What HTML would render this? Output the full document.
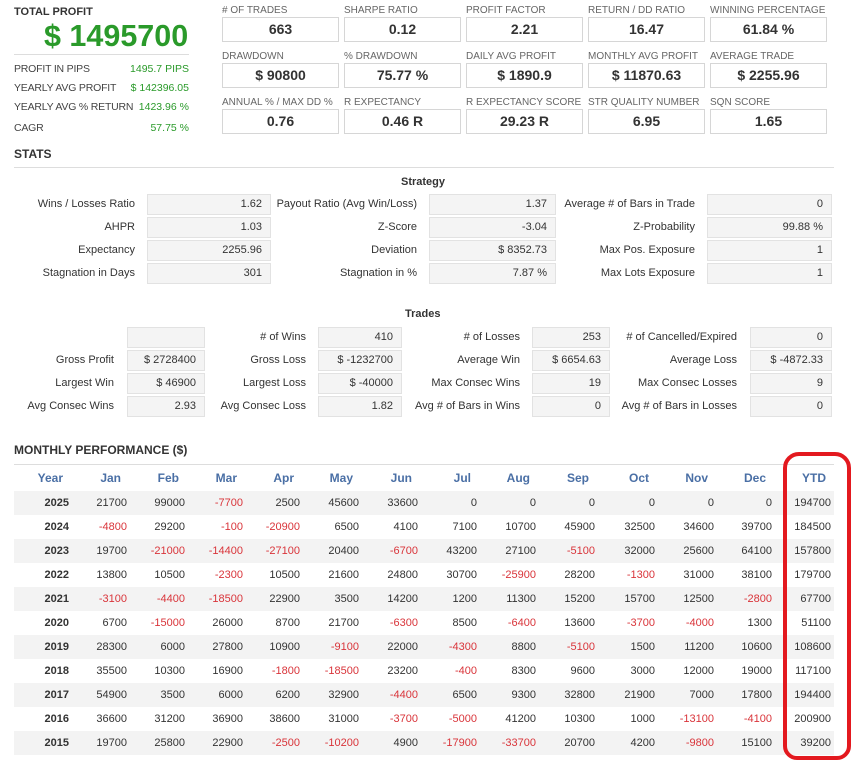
<!DOCTYPE html>
<html><head><meta charset="utf-8"><style>
*{margin:0;padding:0;box-sizing:border-box}
body{width:860px;height:771px;background:#fff;font-family:"Liberation Sans",Arial,sans-serif;color:#333;position:relative;overflow:hidden}
.a{position:absolute;white-space:nowrap}
.lbl{font-size:10px;color:#666}
.box{position:absolute;width:117px;height:25px;border:1px solid #d6d6d6;font-weight:bold;font-size:14px;text-align:center;line-height:23px;color:#333}
.lr{font-size:10.5px;color:#444;letter-spacing:-0.2px}
.g{color:#2a9a2a;font-size:10.5px}
.sl{position:absolute;font-size:11px;color:#333;text-align:right;line-height:21px}
.sb{position:absolute;height:21px;background:#f4f4f4;border:1px solid #e2e2e2;font-size:11px;text-align:right;padding-right:8px;line-height:19px;color:#333}
table{position:absolute;left:14px;top:464px;border-collapse:collapse;font-size:11px}
td,th{height:24px;text-align:right;padding-right:6px}
th{color:#4a6fa5;font-size:12px;height:27px;padding-right:12px}
tr.s td{background:#f3f3f3}
td.y{font-weight:bold}
.n{color:#d9343a}
</style></head><body>
<div class="a" style="left:14px;top:6px;font-size:11px;font-weight:bold;color:#333">TOTAL PROFIT</div>
<div class="a" style="left:44px;top:19px;font-size:30.5px;font-weight:bold;color:#2a9a2a">$ 1495700</div>
<div class="a" style="left:14px;top:54px;width:175px;border-top:1px solid #ddd"></div>
<div class="a lr" style="left:14px;top:63px">PROFIT IN PIPS</div><div class="a g" style="right:671px;top:63px">1495.7 PIPS</div>
<div class="a lr" style="left:14px;top:82px">YEARLY AVG PROFIT</div><div class="a g" style="right:671px;top:82px">$ 142396.05</div>
<div class="a lr" style="left:14px;top:101px">YEARLY AVG % RETURN</div><div class="a g" style="right:671px;top:101px">1423.96 %</div>
<div class="a lr" style="left:14px;top:122px">CAGR</div><div class="a g" style="right:671px;top:122px">57.75 %</div>

<div class="a lbl" style="left:222px;top:5px"># OF TRADES</div><div class="box" style="left:222px;top:17px">663</div>
<div class="a lbl" style="left:344px;top:5px">SHARPE RATIO</div><div class="box" style="left:344px;top:17px">0.12</div>
<div class="a lbl" style="left:466px;top:5px">PROFIT FACTOR</div><div class="box" style="left:466px;top:17px">2.21</div>
<div class="a lbl" style="left:588px;top:5px">RETURN / DD RATIO</div><div class="box" style="left:588px;top:17px">16.47</div>
<div class="a lbl" style="left:710px;top:5px">WINNING PERCENTAGE</div><div class="box" style="left:710px;top:17px">61.84 %</div>
<div class="a lbl" style="left:222px;top:51px">DRAWDOWN</div><div class="box" style="left:222px;top:63px">$ 90800</div>
<div class="a lbl" style="left:344px;top:51px">% DRAWDOWN</div><div class="box" style="left:344px;top:63px">75.77 %</div>
<div class="a lbl" style="left:466px;top:51px">DAILY AVG PROFIT</div><div class="box" style="left:466px;top:63px">$ 1890.9</div>
<div class="a lbl" style="left:588px;top:51px">MONTHLY AVG PROFIT</div><div class="box" style="left:588px;top:63px">$ 11870.63</div>
<div class="a lbl" style="left:710px;top:51px">AVERAGE TRADE</div><div class="box" style="left:710px;top:63px">$ 2255.96</div>
<div class="a lbl" style="left:222px;top:97px">ANNUAL % / MAX DD %</div><div class="box" style="left:222px;top:109px">0.76</div>
<div class="a lbl" style="left:344px;top:97px">R EXPECTANCY</div><div class="box" style="left:344px;top:109px">0.46 R</div>
<div class="a lbl" style="left:466px;top:97px">R EXPECTANCY SCORE</div><div class="box" style="left:466px;top:109px">29.23 R</div>
<div class="a lbl" style="left:588px;top:97px">STR QUALITY NUMBER</div><div class="box" style="left:588px;top:109px">6.95</div>
<div class="a lbl" style="left:710px;top:97px">SQN SCORE</div><div class="box" style="left:710px;top:109px">1.65</div>

<div class="a" style="left:14px;top:147px;font-size:12px;font-weight:bold">STATS</div>
<div class="a" style="left:14px;top:167px;width:820px;border-top:1px solid #ddd"></div>
<div class="a" style="left:401px;top:176px;font-size:11px;font-weight:bold">Strategy</div>

<div class="sl" style="right:725px;top:194px">Wins / Losses Ratio</div><div class="sb" style="left:147px;top:194px;width:124px">1.62</div>
<div class="sl" style="right:443px;top:194px">Payout Ratio (Avg Win/Loss)</div><div class="sb" style="left:429px;top:194px;width:127px">1.37</div>
<div class="sl" style="right:165px;top:194px">Average # of Bars in Trade</div><div class="sb" style="left:707px;top:194px;width:125px">0</div>
<div class="sl" style="right:725px;top:217px">AHPR</div><div class="sb" style="left:147px;top:217px;width:124px">1.03</div>
<div class="sl" style="right:443px;top:217px">Z-Score</div><div class="sb" style="left:429px;top:217px;width:127px">-3.04</div>
<div class="sl" style="right:165px;top:217px">Z-Probability</div><div class="sb" style="left:707px;top:217px;width:125px">99.88 %</div>
<div class="sl" style="right:725px;top:240px">Expectancy</div><div class="sb" style="left:147px;top:240px;width:124px">2255.96</div>
<div class="sl" style="right:443px;top:240px">Deviation</div><div class="sb" style="left:429px;top:240px;width:127px">$ 8352.73</div>
<div class="sl" style="right:165px;top:240px">Max Pos. Exposure</div><div class="sb" style="left:707px;top:240px;width:125px">1</div>
<div class="sl" style="right:725px;top:263px">Stagnation in Days</div><div class="sb" style="left:147px;top:263px;width:124px">301</div>
<div class="sl" style="right:443px;top:263px">Stagnation in %</div><div class="sb" style="left:429px;top:263px;width:127px">7.87 %</div>
<div class="sl" style="right:165px;top:263px">Max Lots Exposure</div><div class="sb" style="left:707px;top:263px;width:125px">1</div>

<div class="a" style="left:405px;top:308px;font-size:11px;font-weight:bold">Trades</div>
<div class="sb" style="left:127px;top:327px;width:78px"></div>
<div class="sl" style="right:554px;top:327px"># of Wins</div><div class="sb" style="left:318px;top:327px;width:84px">410</div>
<div class="sl" style="right:340px;top:327px"># of Losses</div><div class="sb" style="left:532px;top:327px;width:78px">253</div>
<div class="sl" style="right:123px;top:327px"># of Cancelled/Expired</div><div class="sb" style="left:750px;top:327px;width:82px">0</div>
<div class="sl" style="right:746px;top:350px">Gross Profit</div><div class="sb" style="left:127px;top:350px;width:78px">$ 2728400</div>
<div class="sl" style="right:554px;top:350px">Gross Loss</div><div class="sb" style="left:318px;top:350px;width:84px">$ -1232700</div>
<div class="sl" style="right:340px;top:350px">Average Win</div><div class="sb" style="left:532px;top:350px;width:78px">$ 6654.63</div>
<div class="sl" style="right:123px;top:350px">Average Loss</div><div class="sb" style="left:750px;top:350px;width:82px">$ -4872.33</div>
<div class="sl" style="right:746px;top:373px">Largest Win</div><div class="sb" style="left:127px;top:373px;width:78px">$ 46900</div>
<div class="sl" style="right:554px;top:373px">Largest Loss</div><div class="sb" style="left:318px;top:373px;width:84px">$ -40000</div>
<div class="sl" style="right:340px;top:373px">Max Consec Wins</div><div class="sb" style="left:532px;top:373px;width:78px">19</div>
<div class="sl" style="right:123px;top:373px">Max Consec Losses</div><div class="sb" style="left:750px;top:373px;width:82px">9</div>
<div class="sl" style="right:746px;top:396px">Avg Consec Wins</div><div class="sb" style="left:127px;top:396px;width:78px">2.93</div>
<div class="sl" style="right:554px;top:396px">Avg Consec Loss</div><div class="sb" style="left:318px;top:396px;width:84px">1.82</div>
<div class="sl" style="right:340px;top:396px">Avg # of Bars in Wins</div><div class="sb" style="left:532px;top:396px;width:78px">0</div>
<div class="sl" style="right:123px;top:396px">Avg # of Bars in Losses</div><div class="sb" style="left:750px;top:396px;width:82px">0</div>

<div class="a" style="left:14px;top:443px;font-size:12px;font-weight:bold">MONTHLY PERFORMANCE ($)</div>
<div class="a" style="left:14px;top:464px;width:820px;border-top:1px solid #ddd"></div>
<table>
<colgroup><col style="width:61px"><col style="width:58px"><col style="width:58px"><col style="width:58px"><col style="width:57px"><col style="width:59px"><col style="width:59px"><col style="width:59px"><col style="width:59px"><col style="width:59px"><col style="width:60px"><col style="width:59px"><col style="width:58px"><col style="width:56px"></colgroup>
<tr><th>Year</th><th>Jan</th><th>Feb</th><th>Mar</th><th>Apr</th><th>May</th><th>Jun</th><th>Jul</th><th>Aug</th><th>Sep</th><th>Oct</th><th>Nov</th><th>Dec</th><th style="padding-right:8px">YTD</th></tr>
<tr class="s"><td class="y">2025</td><td>21700</td><td>99000</td><td class="n">-7700</td><td>2500</td><td>45600</td><td>33600</td><td>0</td><td>0</td><td>0</td><td>0</td><td>0</td><td>0</td><td style="padding-right:3px">194700</td></tr>
<tr><td class="y">2024</td><td class="n">-4800</td><td>29200</td><td class="n">-100</td><td class="n">-20900</td><td>6500</td><td>4100</td><td>7100</td><td>10700</td><td>45900</td><td>32500</td><td>34600</td><td>39700</td><td style="padding-right:3px">184500</td></tr>
<tr class="s"><td class="y">2023</td><td>19700</td><td class="n">-21000</td><td class="n">-14400</td><td class="n">-27100</td><td>20400</td><td class="n">-6700</td><td>43200</td><td>27100</td><td class="n">-5100</td><td>32000</td><td>25600</td><td>64100</td><td style="padding-right:3px">157800</td></tr>
<tr><td class="y">2022</td><td>13800</td><td>10500</td><td class="n">-2300</td><td>10500</td><td>21600</td><td>24800</td><td>30700</td><td class="n">-25900</td><td>28200</td><td class="n">-1300</td><td>31000</td><td>38100</td><td style="padding-right:3px">179700</td></tr>
<tr class="s"><td class="y">2021</td><td class="n">-3100</td><td class="n">-4400</td><td class="n">-18500</td><td>22900</td><td>3500</td><td>14200</td><td>1200</td><td>11300</td><td>15200</td><td>15700</td><td>12500</td><td class="n">-2800</td><td style="padding-right:3px">67700</td></tr>
<tr><td class="y">2020</td><td>6700</td><td class="n">-15000</td><td>26000</td><td>8700</td><td>21700</td><td class="n">-6300</td><td>8500</td><td class="n">-6400</td><td>13600</td><td class="n">-3700</td><td class="n">-4000</td><td>1300</td><td style="padding-right:3px">51100</td></tr>
<tr class="s"><td class="y">2019</td><td>28300</td><td>6000</td><td>27800</td><td>10900</td><td class="n">-9100</td><td>22000</td><td class="n">-4300</td><td>8800</td><td class="n">-5100</td><td>1500</td><td>11200</td><td>10600</td><td style="padding-right:3px">108600</td></tr>
<tr><td class="y">2018</td><td>35500</td><td>10300</td><td>16900</td><td class="n">-1800</td><td class="n">-18500</td><td>23200</td><td class="n">-400</td><td>8300</td><td>9600</td><td>3000</td><td>12000</td><td>19000</td><td style="padding-right:3px">117100</td></tr>
<tr class="s"><td class="y">2017</td><td>54900</td><td>3500</td><td>6000</td><td>6200</td><td>32900</td><td class="n">-4400</td><td>6500</td><td>9300</td><td>32800</td><td>21900</td><td>7000</td><td>17800</td><td style="padding-right:3px">194400</td></tr>
<tr><td class="y">2016</td><td>36600</td><td>31200</td><td>36900</td><td>38600</td><td>31000</td><td class="n">-3700</td><td class="n">-5000</td><td>41200</td><td>10300</td><td>1000</td><td class="n">-13100</td><td class="n">-4100</td><td style="padding-right:3px">200900</td></tr>
<tr class="s"><td class="y">2015</td><td>19700</td><td>25800</td><td>22900</td><td class="n">-2500</td><td class="n">-10200</td><td>4900</td><td class="n">-17900</td><td class="n">-33700</td><td>20700</td><td>4200</td><td class="n">-9800</td><td>15100</td><td style="padding-right:3px">39200</td></tr>
</table>
<div class="a" style="left:783px;top:452px;width:68px;height:308px;border:4px solid #e3191f;border-radius:16px 16px 14px 14px"></div>
</body></html>
